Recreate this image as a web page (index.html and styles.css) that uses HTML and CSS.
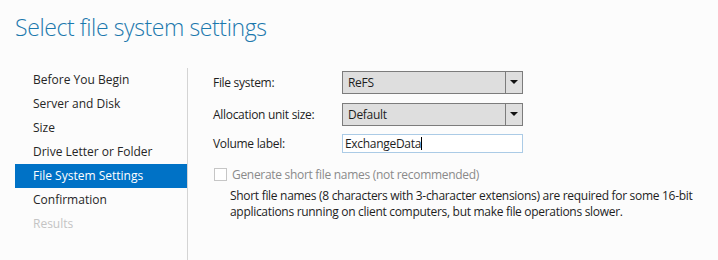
FILE: index.html
```html
<!DOCTYPE html>
<html lang="en">
<head>
  <meta charset="UTF-8" />
  <title>Select file system settings</title>
  <link rel="stylesheet" href="styles.css">
</head>
<body>
  <h1 class="title">Select file system settings</h1>
  <div class="main">
    <ul class="steps">
      <li>Before You Begin</li>
      <li>Server and Disk</li>
      <li>Size</li>
      <li>Drive Letter or Folder</li>
      <li class="active">File System Settings</li>
      <li>Confirmation</li>
      <li class="disabled">Results</li>
    </ul>
    <div class="content">
      <div class="row">
        <label class="label">File system:</label>
        <div class="select"><span class="value">ReFS</span><span class="arrow"></span></div>
      </div>
      <div class="row">
        <label class="label">Allocation unit size:</label>
        <div class="select"><span class="value">Default</span><span class="arrow"></span></div>
      </div>
      <div class="row">
        <label class="label">Volume label:</label>
        <div class="textbox">ExchangeData<span class="caret"></span></div>
      </div>
      <div class="check">
        <span class="box"></span>
        <span class="check-label">Generate short file names (not recommended)</span>
      </div>
      <p class="note">Short file names (8 characters with 3-character extensions) are required for some 16-bit applications running on client computers, but make file operations slower.</p>
    </div>
  </div>
</body>
</html>
```
FILE: styles.css
```css
body {
  margin: 0;
  background: #fcfcfc;
  font-family: "Open Sans", "Noto Sans", sans-serif;
  font-size: 12px;
  color: #1e1e1e;
  height: 260px;
  overflow: hidden;
}
.title {
  margin: 0;
  padding: 11px 0 0 15px;
  height: 56px;
  box-sizing: border-box;
  font-size: 23px;
  font-weight: 300;
  color: #1b78ad;
  letter-spacing: -0.4px;
}
.main {
  display: flex;
  margin-top: 12px;
  height: 192px;
}
.steps {
  list-style: none;
  margin: 0;
  padding: 0 0 0 15px;
  width: 172px;
  flex-shrink: 0;
  border-right: 1px solid #d4d4d4;
}
.steps li {
  height: 24px;
  line-height: 24px;
  padding-left: 18px;
  color: #262626;
}
.steps li.active {
  background: #0072c6;
  color: #fff;
}
.steps li.disabled {
  color: #c4c4c4;
}
.content {
  padding: 3px 0 0 25px;
  letter-spacing: -0.3px;
}
.row {
  display: flex;
  align-items: center;
  margin-bottom: 9px;
}
.row:nth-child(2) {
  margin-bottom: 8px;
}
.label {
  width: 129px;
}
.select {
  display: flex;
  width: 181px;
  height: 23px;
  box-sizing: border-box;
  border: 1px solid #7c7c7c;
  background: #dedede;
}
.select .value {
  flex: 1;
  line-height: 21px;
  padding-left: 5px;
}
.select .arrow {
  width: 16px;
  border-left: 1px solid #7c7c7c;
  position: relative;
}
.select .arrow::after {
  content: "";
  position: absolute;
  left: 4px;
  top: 8px;
  border-left: 4px solid transparent;
  border-right: 4px solid transparent;
  border-top: 4px solid #111;
}
.textbox {
  width: 181px;
  height: 19px;
  box-sizing: border-box;
  border: 1px solid #abcbe6;
  background: #fff;
  line-height: 17px;
  padding-left: 2px;
}
.caret {
  display: inline-block;
  width: 1px;
  height: 13px;
  background: #000;
  vertical-align: -2px;
}
.check {
  display: flex;
  align-items: center;
  margin: 13px 0 0 1px;
}
.box {
  width: 13px;
  height: 13px;
  box-sizing: border-box;
  border: 1px solid #c6c6c6;
  background: #fff;
}
.check-label {
  margin-left: 5px;
  color: #8a8a8a;
}
.note {
  margin: 5px 0 0 17px;
  line-height: 16px;
  width: 470px;
}
```
